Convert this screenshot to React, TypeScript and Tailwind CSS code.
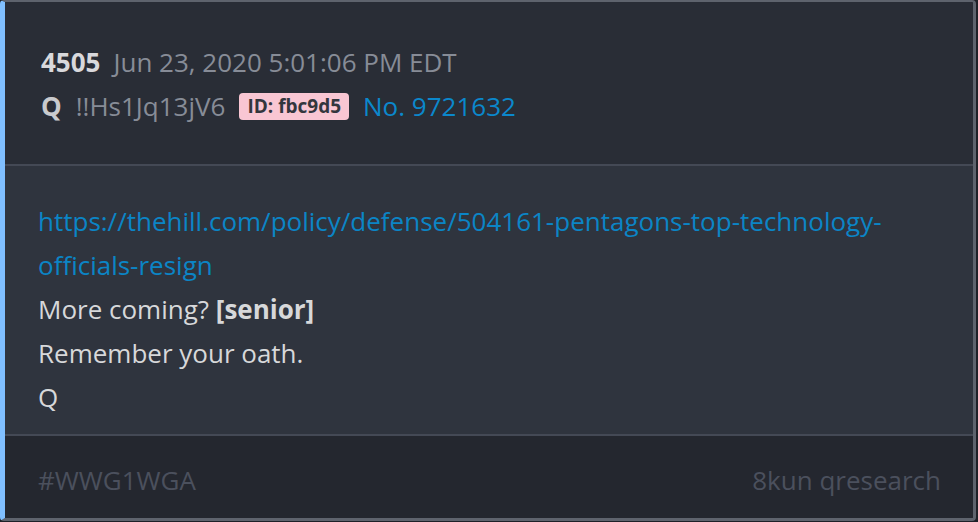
import React from 'react';

const bodyLines = [
    { text: 'More coming? ', bold: '[senior]' },
    { text: 'Remember your oath.' },
    { text: 'Q' },
];

export default function App() {
    return (
        <div className="w-[978px] h-[522px] bg-[#1e2128] font-['Open_Sans',sans-serif]">
            <div className="w-[976px] h-[521px] flex flex-col overflow-hidden rounded-[4px] border-t-2 border-r-[3px] border-b-[3px] border-l-[5px] border-[#5e636d] border-l-[#80bfff]">
                {/* Header */}
                <div className="bg-[#292d36] pl-[36px] pt-[38px] pb-[36px] text-[26px] leading-[44px]">
                    <div className="flex items-center gap-[13px]">
                        <span className="font-bold text-[#d9d9dc]">4505</span>
                        <span className="text-[#878c97]">Jun 23, 2020 5:01:06 PM EDT</span>
                    </div>
                    <div className="flex items-center gap-[14px]">
                        <span className="font-bold text-[#c9cacd]">Q</span>
                        <span className="text-[#878c97]">!!Hs1Jq13jV6</span>
                        <span className="rounded-[4px] bg-[#f9c6d3] px-[8px] text-[19px] font-bold leading-[27px] text-[#33363d]">
                            ID: fbc9d5
                        </span>
                        <span className="text-[#0b88cc]">No. 9721632</span>
                    </div>
                </div>

                <div className="h-[2px] bg-[#444955]" />

                {/* Body */}
                <div className="flex-1 bg-[#2f343e] pl-[33px] pr-[40px] pt-[33px] text-[26px] leading-[44px] text-[#d7d8da]">
                    <a className="block text-[#0b85c6] break-words">
                        https://thehill.com/policy/defense/504161-pentagons-top-technology-officials-resign
                    </a>
                    {bodyLines.map((line) => (
                        <div key={line.text}>
                            {line.text}
                            {line.bold && <span className="font-bold">{line.bold}</span>}
                        </div>
                    ))}
                </div>

                <div className="h-[2px] bg-[#444955]" />

                {/* Footer */}
                <div className="h-[82px] bg-[#24272f] pl-[33px] pr-[32px] pt-[6px] flex items-center justify-between text-[26px] text-[#4b505d]">
                    <span>#WWG1WGA</span>
                    <span>8kun qresearch</span>
                </div>
            </div>
        </div>
    );
}
